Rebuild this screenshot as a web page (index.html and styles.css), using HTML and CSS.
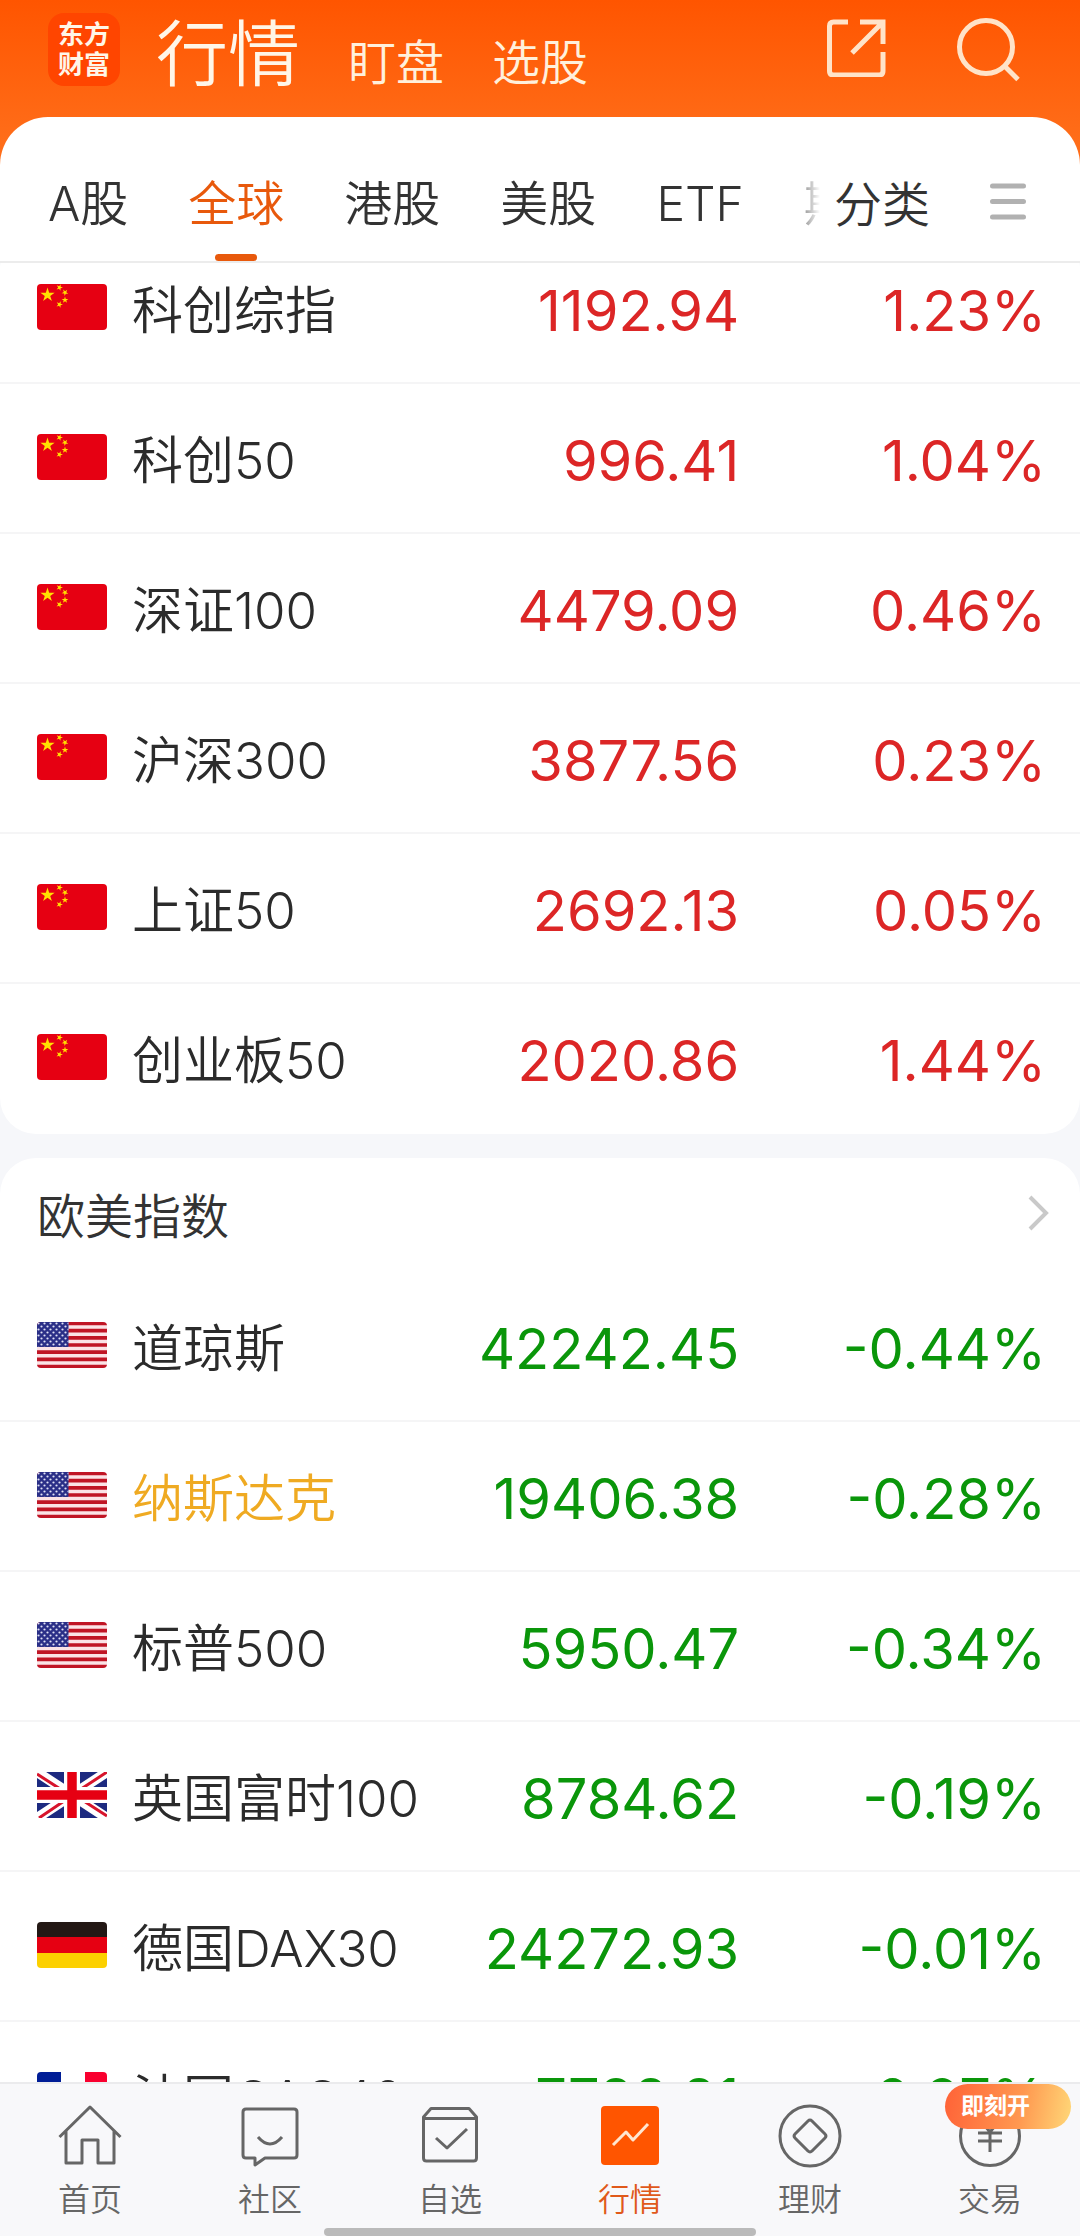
FILE: index.html
```html
<!DOCTYPE html>
<html lang="zh-CN">
<head>
<meta charset="utf-8">
<meta name="viewport" content="width=device-width, initial-scale=1">
<title>行情 - 全球</title>
<link rel="stylesheet" href="styles.css">
</head>
<body>
<svg class="defs" aria-hidden="true">
  <defs>
    <clipPath id="flag-clip"><rect width="70" height="46" rx="4"/></clipPath>
    <path id="star" d="M0-1 .225-.309 .951-.309 .363.118 .588.809 0 .382-.588.809-.363.118-.951-.309-.225-.309Z" fill="#ffe100"/>
    <pattern id="stars" width="6" height="6" patternUnits="userSpaceOnUse">
      <circle cx="1.5" cy="1.5" r="1.1" fill="#dfe0f5"/><circle cx="4.5" cy="4.5" r="1.1" fill="#dfe0f5"/>
    </pattern>
  </defs>
  <symbol id="cn" viewBox="0 0 70 46">
    <g clip-path="url(#flag-clip)">
      <path fill="#e60012" d="M0 0h70v46H0z"/>
      <use href="#star" transform="translate(10.500 11) scale(7.500)"/>
      <use href="#star" transform="translate(22.500 3.500) rotate(20) scale(3.500)"/>
      <use href="#star" transform="translate(28 8.500) rotate(40) scale(3.500)"/>
      <use href="#star" transform="translate(28 16) scale(3.500)"/>
      <use href="#star" transform="translate(22.500 20.500) rotate(20) scale(3.500)"/>
    </g>
  </symbol>
  <symbol id="us" viewBox="0 0 70 46">
    <g clip-path="url(#flag-clip)">
      <path fill="#fbe3e6" d="M0 0h70v46H0z"/>
      <path stroke="#c01525" stroke-width="3.700" d="M0 1.500h70M0 8.700h70M0 15.900h70M0 23h70M0 30.200h70M0 37.300h70M0 44.500h70"/>
      <path fill="#2a2f87" d="M0 0h31.500v25H0z"/>
      <path fill="url(#stars)" d="M0 0h31.500v24.500H0z"/>
    </g>
  </symbol>
  <symbol id="gb" viewBox="0 0 70 46">
    <path fill="#1d2a80" d="M0 0h70v46H0z"/>
    <path stroke="#fff" stroke-width="10" d="M0 0l70 46M70 0L0 46"/>
    <path stroke="#d7142c" stroke-width="3" d="M0 2l31 20M70 0L38 21M70 44L39 24M2 46l31-21"/>
    <path stroke="#fff" stroke-width="16" d="M35 0v46M0 23h70"/>
    <path stroke="#e60012" stroke-width="9.500" d="M35 0v46M0 23h70"/>
  </symbol>
  <symbol id="de" viewBox="0 0 70 46">
    <g clip-path="url(#flag-clip)">
      <path fill="#231815" d="M0 0h70v15H0z"/><path fill="#e60012" d="M0 15h70v16H0z"/><path fill="#fcd000" d="M0 31h70v15H0z"/>
    </g>
  </symbol>
  <symbol id="fr" viewBox="0 0 70 46">
    <g clip-path="url(#flag-clip)">
      <path fill="#fff" d="M0 0h70v46H0z"/><path fill="#001d96" d="M0 0h24v46H0z"/><path fill="#f9002f" d="M48 0h22v46H48z"/>
    </g>
  </symbol>
</svg>

<div class="app">
  <header class="top">
    <div class="bar">
      <div class="logo"><span>东方</span><span>财富</span></div>
      <nav class="sections">
        <a class="current" href="#quotes">行情</a>
        <a href="#watch">盯盘</a>
        <a href="#pick">选股</a>
      </nav>
      <button class="icon-button" aria-label="分享">
        <svg width="60" height="60" viewBox="0 0 60 60" fill="none" stroke="#ffe3c8" stroke-width="5">
          <path d="M22 5H7.500Q3.500 5 3.500 9v45q0 4 4 4H53q4 0 4-4V35M34 5h23v22M56 6L26 36"/>
        </svg>
      </button>
      <button class="icon-button" aria-label="搜索">
        <svg width="66" height="66" viewBox="0 0 66 66" fill="none" stroke="#ffe3c8" stroke-width="5">
          <circle cx="30" cy="30" r="26.500"/><path d="M48.500 49L62 62.500"/>
        </svg>
      </button>
    </div>
    <div class="sheet">
      <nav class="tabs">
        <a href="#a">A股</a>
        <a class="active" href="#global">全球</a>
        <a href="#hk">港股</a>
        <a href="#us-stocks">美股</a>
        <a href="#etf">ETF</a>
        <a href="#futures">期货</a>
      </nav>
      <a class="category" href="#category">分类</a>
      <button class="icon-button menu" aria-label="菜单">
        <svg width="36" height="38" viewBox="0 0 36 38" stroke="#b1b1b1" stroke-width="5" stroke-linecap="round"><path d="M2.500 3h31M2.500 18.500h31M2.500 34h31"/></svg>
      </button>
    </div>
  </header>

  <main class="content">
    <section class="card card-first">
      <table class="quotes up">
        <tbody>
          <tr><th scope="row"><span class="name"><svg class="flag"><use href="#cn"/></svg>科创综指</span></th><td>1192.94</td><td>1.23%</td></tr>
          <tr><th scope="row"><span class="name"><svg class="flag"><use href="#cn"/></svg>科创50</span></th><td>996.41</td><td>1.04%</td></tr>
          <tr><th scope="row"><span class="name"><svg class="flag"><use href="#cn"/></svg>深证100</span></th><td>4479.09</td><td>0.46%</td></tr>
          <tr><th scope="row"><span class="name"><svg class="flag"><use href="#cn"/></svg>沪深300</span></th><td>3877.56</td><td>0.23%</td></tr>
          <tr><th scope="row"><span class="name"><svg class="flag"><use href="#cn"/></svg>上证50</span></th><td>2692.13</td><td>0.05%</td></tr>
          <tr><th scope="row"><span class="name"><svg class="flag"><use href="#cn"/></svg>创业板50</span></th><td>2020.86</td><td>1.44%</td></tr>
        </tbody>
      </table>
    </section>

    <section class="card">
      <h2 class="card-title"><a href="#western">欧美指数
        <svg width="22" height="36" viewBox="0 0 22 36" fill="none" stroke="#c9c9c9" stroke-width="4"><path d="M2 2l16 16L2 34"/></svg></a></h2>
      <table class="quotes down">
        <tbody>
          <tr><th scope="row"><span class="name"><svg class="flag"><use href="#us"/></svg>道琼斯</span></th><td>42242.45</td><td>-0.44%</td></tr>
          <tr><th scope="row"><span class="name starred"><svg class="flag"><use href="#us"/></svg>纳斯达克</span></th><td>19406.38</td><td>-0.28%</td></tr>
          <tr><th scope="row"><span class="name"><svg class="flag"><use href="#us"/></svg>标普500</span></th><td>5950.47</td><td>-0.34%</td></tr>
          <tr><th scope="row"><span class="name"><svg class="flag"><use href="#gb"/></svg>英国富时100</span></th><td>8784.62</td><td>-0.19%</td></tr>
          <tr><th scope="row"><span class="name"><svg class="flag"><use href="#de"/></svg>德国DAX30</span></th><td>24272.93</td><td>-0.01%</td></tr>
          <tr><th scope="row"><span class="name"><svg class="flag"><use href="#fr"/></svg>法国CAC40</span></th><td>7788.81</td><td>-0.27%</td></tr>
        </tbody>
      </table>
    </section>
  </main>

  <footer class="dock">
    <nav class="dock-items">
      <a href="#home">
        <svg viewBox="0 0 64 64"><path d="M1.500 33L32 3l30.500 30M8 27v32h16V36h16v23h16V27"/></svg>首页</a>
      <a href="#community">
        <svg viewBox="0 0 64 64"><path d="M8 5h48q3 0 3 3v43q0 3-3 3H27l-10 7v-7H8q-3 0-3-3V8q0-3 3-3zM20 33q12 14 24 0"/></svg>社区</a>
      <a href="#favorites">
        <svg viewBox="0 0 64 64"><path d="M13 4.500h38L58.500 13v41q0 3-3 3h-47q-3 0-3-3V13zM5.500 14.500h53M18 34l11 10 20-19"/></svg>自选</a>
      <a class="active" href="#quotes">
        <svg viewBox="0 0 64 64"><rect x="3" y="2" width="58" height="59" rx="4"/><path d="M15 41l13-13 7 8 15-16"/></svg>行情</a>
      <a href="#wealth">
        <svg viewBox="0 0 64 64"><circle cx="32" cy="32" r="30"/><path d="M30 17q2-2 4 0l13 13q2 2 0 4L34 47q-2 2-4 0L17 34q-2-2 0-4z"/></svg>理财</a>
      <a href="#trade">
        <svg viewBox="0 0 64 64"><circle cx="32" cy="32" r="29.500"/><path d="M22 16l10 12 10-12M20 29h24M20 37h24M32 28v20"/></svg>交易
        <span class="badge">即刻开</span></a>
    </nav>
    <div class="home-indicator"></div>
  </footer>
</div>
</body>
</html>
```

FILE: styles.css
```css
* {
  box-sizing: border-box;
}

body {
  margin: 0;
  background: #f6f7fa;
  color: #2b2b2b;
  font-family: Inter, "Noto Sans CJK SC", sans-serif;
  font-weight: 350;
}

a {
  color: inherit;
  text-decoration: none;
}

.defs {
  position: absolute;
  width: 0;
  height: 0;
}

.app {
  display: flex;
  flex-direction: column;
  height: 100vh;
}

/* Header */

.top {
  flex: none;
  background: linear-gradient(#ff5500, #ff6d19 140px);
}

.bar {
  display: flex;
  align-items: flex-start;
  height: 117px;
  padding: 13px 58px 0 48px;
}

.logo {
  display: flex;
  flex-direction: column;
  justify-content: center;
  width: 72px;
  height: 73px;
  border-radius: 16px;
  background: #ff4500;
  color: #fff6e8;
  font-size: 26px;
  font-weight: 700;
  line-height: 30px;
  text-align: center;
}

.sections {
  display: flex;
  flex: 1;
  align-items: baseline;
  gap: 48px;
  margin-left: 36px;
  color: #fff0dc;
  font-size: 48px;
  line-height: 82px;
}

.sections .current {
  color: #fff6e8;
  font-size: 72px;
}

.icon-button {
  display: block;
  padding: 0;
  border: 0;
  background: none;
}

.icon-button svg {
  display: block;
}

.bar .icon-button {
  margin: 4px 0 0 70px;
}

.sheet {
  display: flex;
  align-items: center;
  height: 146px;
  padding-right: 54px;
  border-bottom: 2px solid #ececec;
  border-radius: 48px 48px 0 0;
  background: #fff;
  color: #333;
  font-size: 48px;
}

.tabs {
  display: flex;
  flex: 1;
  gap: 60px;
  align-self: stretch;
  align-items: stretch;
  min-width: 0;
  overflow: hidden;
  padding-left: 48px;
  line-height: 174px;
  white-space: nowrap;
  -webkit-mask-image: linear-gradient(to left, transparent, #000 32px);
  mask-image: linear-gradient(to left, transparent, #000 32px);
}

.tabs a {
  flex: none;
}

.tabs .active {
  display: flex;
  flex-direction: column;
  align-items: center;
  justify-content: space-between;
  color: #e8590c;
}

.tabs .active::after {
  content: "";
  width: 42px;
  height: 7px;
  margin-top: -37px;
  border-radius: 4px;
  background: #e8590c;
}

.category {
  margin: 24px 0 0 14px;
}

.menu {
  margin: 25px 0 0 60px;
}

/* Quote lists */

.content {
  flex: 1;
  min-height: 0;
  overflow: hidden;
}

.card {
  margin-bottom: 24px;
  overflow: hidden;
  border-radius: 36px;
  background: #fff;
}

/* The list rests part-way through its first row */
.card-first {
  margin-top: -30px;
}

.card-title {
  margin: 0;
  color: #333;
  font-size: 48px;
  font-weight: 350;
}

.card-title a {
  display: flex;
  align-items: center;
  justify-content: space-between;
  height: 113px;
  padding: 0 30px 3px 37px;
}

.quotes {
  width: 100%;
  border-collapse: collapse;
  table-layout: fixed;
}

.quotes th,
.quotes td {
  height: 150px;
  padding: 0;
  border-bottom: 2px solid #f5f5f6;
  font-weight: 350;
}

.quotes tr:last-child > * {
  border-bottom-color: transparent;
}

.quotes th {
  width: 42%;
}

.quotes td {
  padding-top: 6px;
  font-size: 56px;
  font-weight: 400;
  text-align: right;
}

.quotes td:last-child {
  padding-right: 34px;
}

.quotes td:nth-child(2) {
  width: 27%;
  padding-right: 6px;
}

.up td {
  color: #dc2626;
}

.down td {
  color: #0a960a;
}

.name {
  display: flex;
  align-items: center;
  gap: 25px;
  padding: 0 0 2px 37px;
  font-size: 51px;
  white-space: nowrap;
}

.starred {
  color: #efaa22;
}

.flag {
  flex: none;
  width: 70px;
  height: 46px;
}

/* Bottom navigation */

.dock {
  flex: none;
  border-top: 2px solid #ebebed;
  background: #f8f8fa;
}

.dock-items {
  display: grid;
  grid-template-columns: repeat(6, 1fr);
}

.dock-items a {
  position: relative;
  display: flex;
  flex-direction: column;
  align-items: center;
  gap: 8px;
  height: 144px;
  padding-top: 20px;
  color: #666;
  font-size: 32px;
  line-height: 48px;
}

.dock-items svg {
  width: 64px;
  height: 64px;
  fill: none;
  stroke: #666;
  stroke-width: 3;
  stroke-linejoin: round;
}

.dock-items .active {
  color: #e0591a;
}

.dock-items .active svg {
  stroke: #ffe6d0;
}

.dock-items .active rect {
  fill: #ff5500;
  stroke: none;
}

.badge {
  position: absolute;
  top: 0;
  left: 50%;
  width: 126px;
  height: 45px;
  margin-left: -45px;
  padding-left: 16px;
  border-radius: 23px;
  background: linear-gradient(100deg, #ff6237, #ff9850 60%, #ffd878);
  color: #fff;
  font-size: 23px;
  font-weight: 700;
  line-height: 45px;
}

.home-indicator {
  width: 40%;
  height: 8px;
  margin: 0 auto;
  border-radius: 4px;
  background: #bababa;
}
```
